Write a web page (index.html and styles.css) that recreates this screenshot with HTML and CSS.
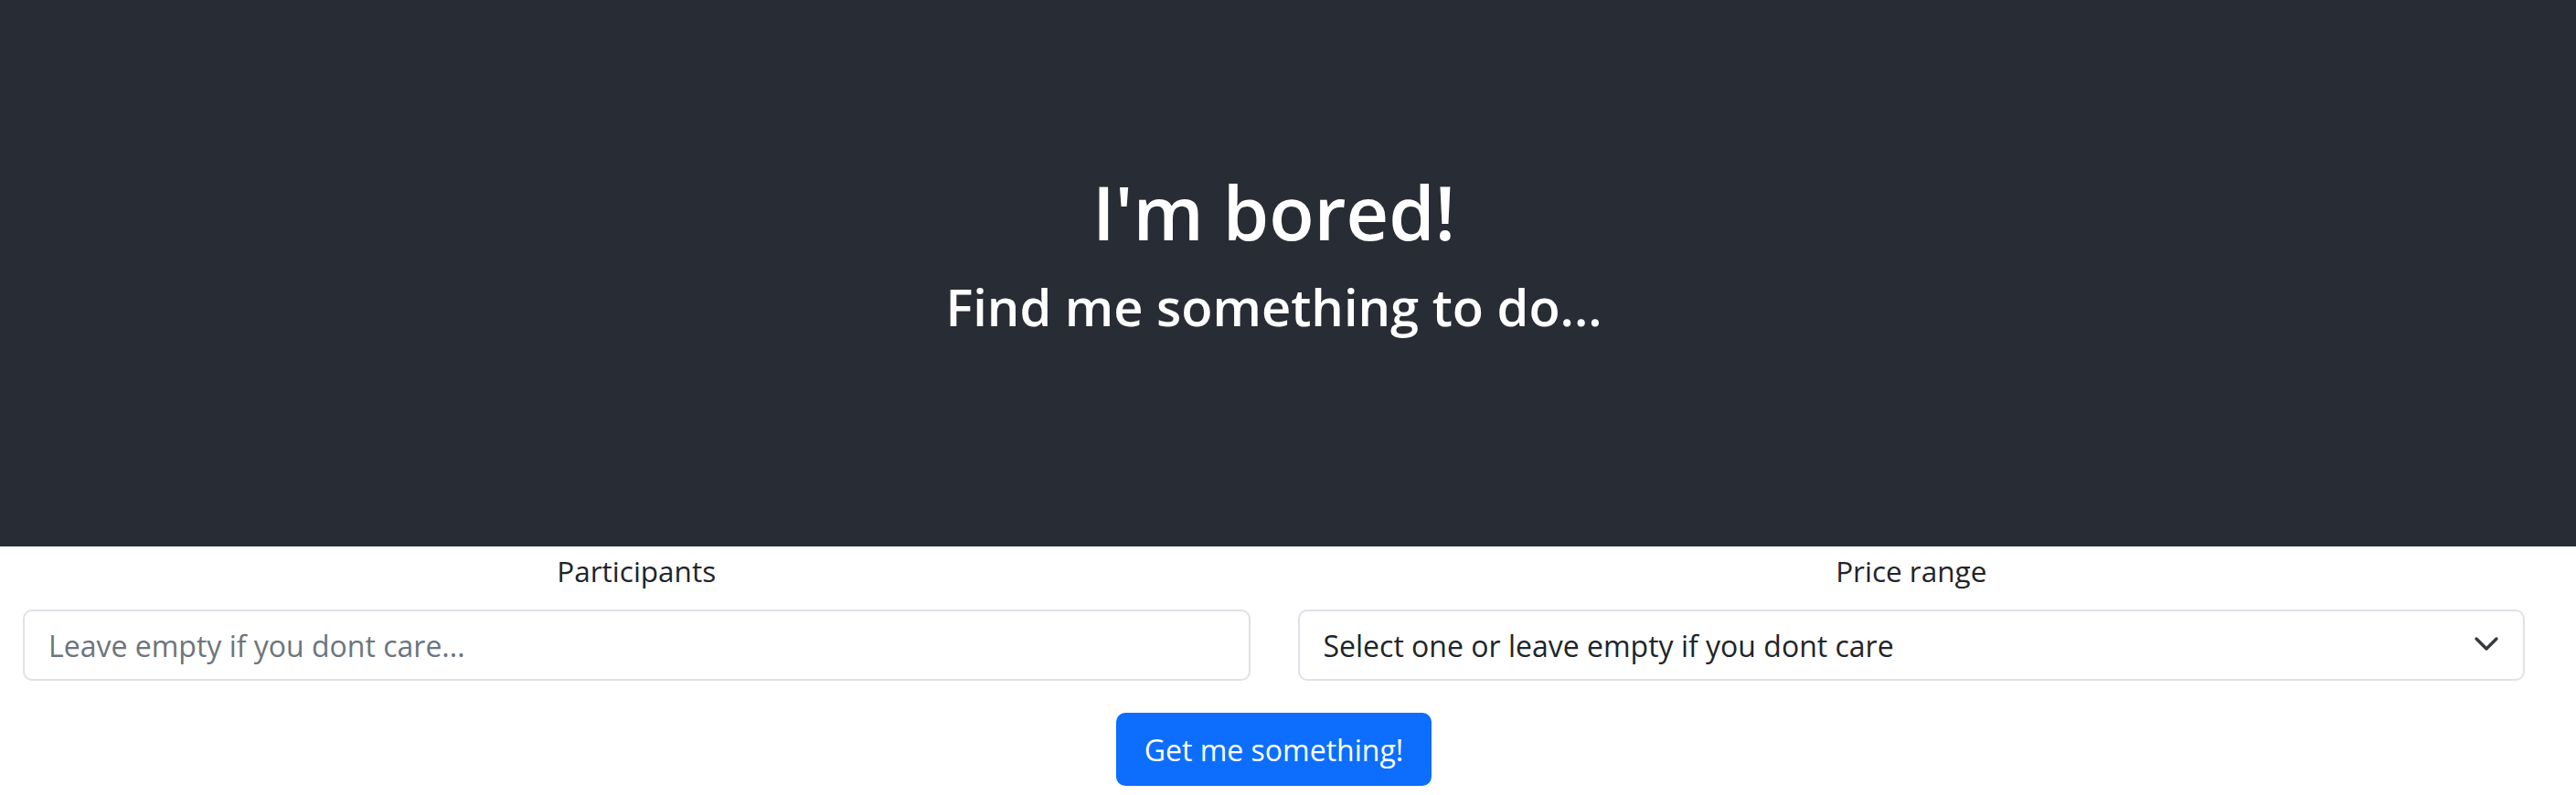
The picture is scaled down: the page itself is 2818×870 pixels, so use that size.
FILE: index.html
```html
<!DOCTYPE html>
<html lang="en">
<head>
<meta charset="utf-8">
<title>I'm bored!</title>
<link rel="stylesheet" href="styles.css">
</head>
<body>
<header class="hero">
  <h1 class="hero-title">I'm bored!</h1>
  <h3 class="hero-sub">Find me something to do...</h3>
</header>
<main class="form-area">
  <div class="fields">
    <div class="field">
      <label class="field-label" for="participants">Participants</label>
      <input id="participants" class="field-input" type="text" placeholder="Leave empty if you dont care...">
    </div>
    <div class="field">
      <label class="field-label" for="price">Price range</label>
      <div class="select-wrap">
        <select id="price" class="field-input field-select">
          <option>Select one or leave empty if you dont care</option>
        </select>
        <svg class="select-chevron" viewBox="0 0 16 16" width="32" height="32" aria-hidden="true"><path d="m2.5 5.5 5.5 5.5 5.5-5.5" fill="none" stroke="#343a40" stroke-width="1.7" stroke-linecap="round" stroke-linejoin="round"/></svg>
      </div>
    </div>
  </div>
  <div class="actions">
    <button class="btn-primary" type="button">Get me something!</button>
  </div>
</main>
</body>
</html>
```

FILE: styles.css
```css
* { box-sizing: border-box; }
html, body { margin: 0; padding: 0; }
body {
  font-family: "Open Sans", "Noto Sans", sans-serif;
  color: #212529;
  background: #fff;
}
.hero {
  height: 598px;
  background: #282c34;
  color: #fff;
  display: flex;
  flex-direction: column;
  align-items: center;
  justify-content: center;
  padding: 0 31px 45px 0;
}
.hero-title {
  margin: 0 0 22px;
  font-size: 81px;
  font-weight: 600;
  line-height: 96px;
}
.hero-sub {
  margin: 0;
  font-size: 56px;
  font-weight: 600;
  line-height: 67px;
}
.form-area {
  padding: 3px 56px 0 25px;
}
.fields {
  display: grid;
  grid-template-columns: 1fr 1fr;
  column-gap: 52px;
}
.field {
  display: flex;
  flex-direction: column;
}
.field-label {
  text-align: center;
  font-size: 31.5px;
  line-height: 48px;
  margin-bottom: 18px;
}
.select-wrap { position: relative; }
.field-input {
  display: block;
  width: 100%;
  height: 78px;
  border: 2px solid #dee2e6;
  border-radius: 10px;
  padding: 0 26px;
  font-family: inherit;
  font-size: 32px;
  color: #212529;
  background: #fff;
  outline: none;
}
.field-input::placeholder { color: #6c757d; opacity: 1; }
.field-select {
  appearance: none;
  -webkit-appearance: none;
  padding-right: 80px;
}
.select-chevron {
  position: absolute;
  right: 26px;
  top: 21px;
  pointer-events: none;
}
.actions {
  display: flex;
  justify-content: center;
  margin-top: 35px;
}
.btn-primary {
  height: 80px;
  padding: 0 29px;
  border: 2px solid #0d6efd;
  border-radius: 10px;
  background: #0d6efd;
  color: #fff;
  font-family: inherit;
  font-size: 32px;
  cursor: pointer;
}
```
